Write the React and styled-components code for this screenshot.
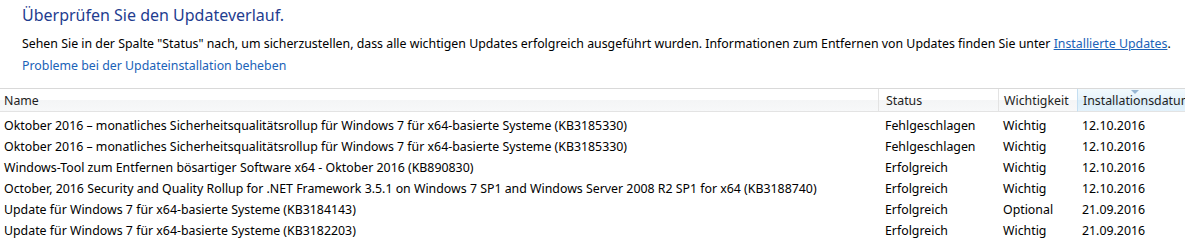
import React from "react";
import styled, { createGlobalStyle } from "styled-components";

const Global = createGlobalStyle`
  html, body { margin: 0; padding: 0; background: #fff; }
  body { font-family: "Noto Sans", "Open Sans", sans-serif; font-size: 12.35px; color: #000; }
`;

const Page = styled.div`
  width: 1185px;
  height: 243px;
  overflow: hidden;
  display: flex;
  flex-direction: column;
`;

const Intro = styled.div`
  padding: 4px 0 0 22px;
  display: flex;
  flex-direction: column;
`;

const Title = styled.h1`
  margin: 0;
  font-weight: normal;
  font-size: 16px;
  line-height: 22px;
  color: #1f3d8f;
`;

const Desc = styled.p`
  margin: 9px 0 0;
  line-height: 17px;
  white-space: nowrap;
`;

const InlineLink = styled.a`
  color: #1a62b8;
  text-decoration: underline;
`;

const TaskLink = styled.a`
  margin-top: 5px;
  color: #1a62b8;
  text-decoration: none;
  line-height: 17px;
`;

const List = styled.div`
  margin-top: 14px;
  border-top: 1px solid #d9d9d9;
  display: grid;
  grid-template-columns: 878px 120px 79px 1fr;
`;

const HeadCell = styled.div`
  position: relative;
  height: 22px;
  display: flex;
  align-items: center;
  padding-left: ${(p) => p.$pad}px;
  white-space: nowrap;
  overflow: hidden;
  color: #1e1e1e;
  border-bottom: 1px solid #e3e3e3;
  border-left: ${(p) => (p.$first ? "none" : `1px solid ${p.$sorted ? "#c5dff2" : "#e3e3e3"}`)};
  background: ${(p) =>
    p.$sorted
      ? "linear-gradient(#f2f9fd 0%, #e6f3fb 50%, #d9edf9 51%, #e3f2fb 100%)"
      : "linear-gradient(#ffffff 0%, #ffffff 50%, #f4f5f6 51%, #f7f8f9 100%)"};
`;

const SortArrow = styled.span`
  position: absolute;
  top: 1px;
  left: 53px;
  width: 0;
  height: 0;
  border-left: 4px solid transparent;
  border-right: 4px solid transparent;
  border-top: 4px solid #97b6d2;
`;

const Cell = styled.div`
  height: 21px;
  display: flex;
  align-items: center;
  padding-left: ${(p) => p.$pad}px;
  white-space: nowrap;
  overflow: hidden;
  margin-top: ${(p) => (p.$firstRow ? 3 : 0)}px;
`;

const pads = [4, 7, 5, 5];

const rows = [
  ["Oktober 2016 – monatliches Sicherheitsqualitätsrollup für Windows 7 für x64-basierte Systeme (KB3185330)", "Fehlgeschlagen", "Wichtig", "12.10.2016"],
  ["Oktober 2016 – monatliches Sicherheitsqualitätsrollup für Windows 7 für x64-basierte Systeme (KB3185330)", "Fehlgeschlagen", "Wichtig", "12.10.2016"],
  ["Windows-Tool zum Entfernen bösartiger Software x64 - Oktober 2016 (KB890830)", "Erfolgreich", "Wichtig", "12.10.2016"],
  ["October, 2016 Security and Quality Rollup for .NET Framework 3.5.1 on Windows 7 SP1 and Windows Server 2008 R2 SP1 for x64 (KB3188740)", "Erfolgreich", "Wichtig", "12.10.2016"],
  ["Update für Windows 7 für x64-basierte Systeme (KB3184143)", "Erfolgreich", "Optional", "21.09.2016"],
  ["Update für Windows 7 für x64-basierte Systeme (KB3182203)", "Erfolgreich", "Wichtig", "21.09.2016"],
];

const headers = ["Name", "Status", "Wichtigkeit", "Installationsdatum"];

export default function App() {
  return (
    <Page>
      <Global />
      <Intro>
        <Title>Überprüfen Sie den Updateverlauf.</Title>
        <Desc>
          Sehen Sie in der Spalte "Status" nach, um sicherzustellen, dass alle wichtigen Updates erfolgreich ausgeführt wurden. Informationen zum Entfernen von Updates finden Sie unter{" "}
          <InlineLink href="#">Installierte Updates</InlineLink>.
        </Desc>
        <TaskLink href="#">Probleme bei der Updateinstallation beheben</TaskLink>
      </Intro>
      <List>
        {headers.map((h, i) => (
          <HeadCell key={h} $pad={pads[i]} $first={i === 0} $sorted={i === 3}>
            {i === 3 && <SortArrow />}
            {h}
          </HeadCell>
        ))}
        {rows.map((r, ri) =>
          r.map((c, ci) => (
            <Cell key={ri + "-" + ci} $pad={pads[ci]} $firstRow={ri === 0}>
              {c}
            </Cell>
          ))
        )}
      </List>
    </Page>
  );
}
